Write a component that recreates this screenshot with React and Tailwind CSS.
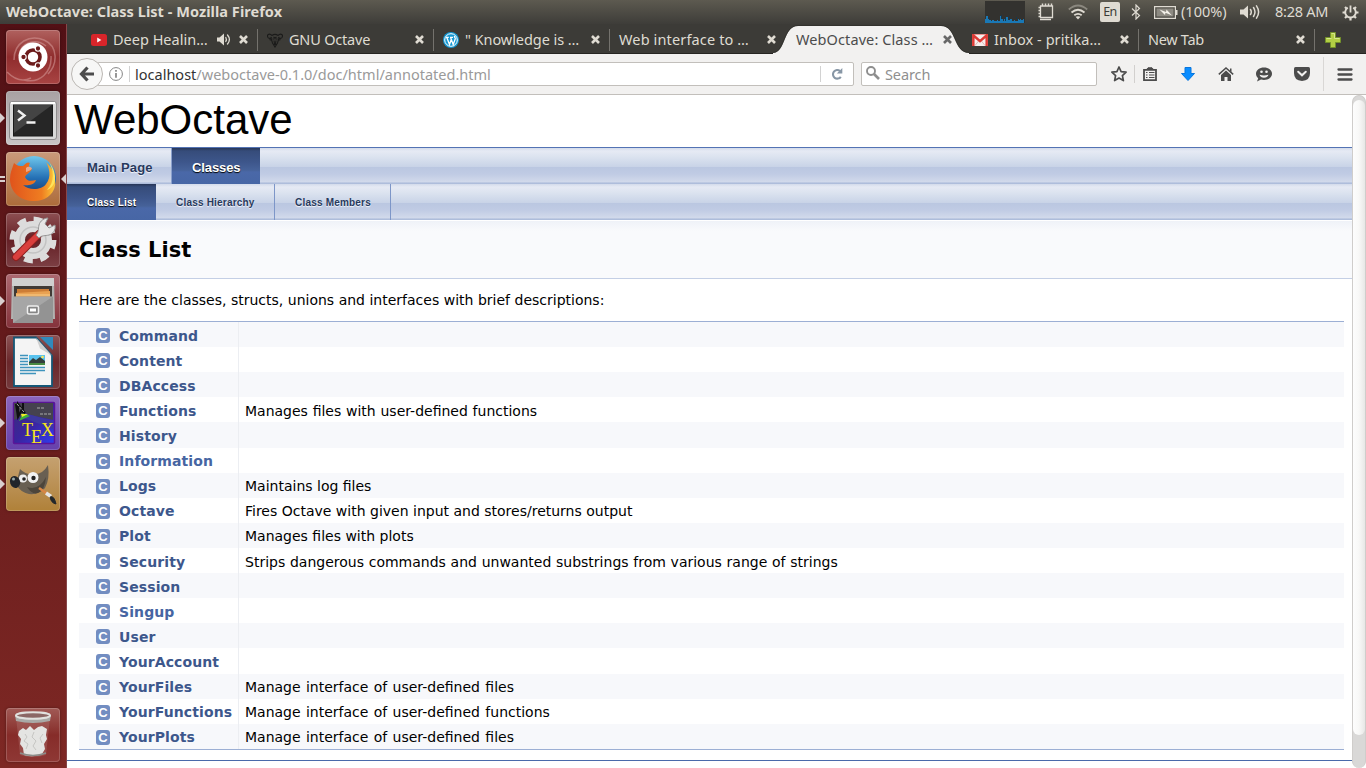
import React from "react";

const UI = "font-['Noto_Sans','Open_Sans',sans-serif]";

const Speaker = ({ className, fill }) => (
  <svg viewBox="0 0 20 16" className={className} fill="none" stroke={fill} strokeWidth="1.5" strokeLinecap="round">
    <path d="M0 5.5h3.5L8 1.5v13l-4.500-4H0z" fill={fill} stroke="none" />
    <path d="M10.500 5.500q1.600 2.500 0 5M13.500 3.500q3 4.500 0 9M16.500 1.800q4.200 6.200 0 12.400" />
  </svg>
);

const TabSpeaker = () => (
  <svg viewBox="0 0 14 13" className="mr-2 h-[13px] w-[14px]" fill="none" stroke="#dfdbd2" strokeLinecap="round">
    <path d="M0 4.500h2.500L7 .5v12L2.500 8.500H0z" fill="#dfdbd2" stroke="none" />
    <path d="M8.800 4.500q1.200 2 0 4" strokeWidth="1.300" />
    <path d="M10.500 2q3.800 4.500 0 9" strokeWidth="1.300" />
  </svg>
);

const Close = ({ color }) => (
  <svg viewBox="0 0 9 9" className="h-[9px] w-[9px] shrink-0" stroke={color} strokeWidth="2.6">
    <path d="M1 1l7 7M8 1L1 8" />
  </svg>
);

const YouTube = () => (
  <svg viewBox="0 0 16 12" className="h-[12px] w-4">
    <rect width="16" height="12" rx="2.500" fill="#d9252a" />
    <path d="M6.200 3.500v5L10.400 6z" fill="#fff" />
  </svg>
);

const Gnu = () => (
  <svg viewBox="0 0 16 16" className="h-4 w-4" fill="none" stroke="#1b1b1a" strokeWidth="1.100">
    <path d="M5 3.500C2 .5-.5 3 1 5.500c1 1.500 3 1 3.500-.5M11 3.500C14 .5 16.500 3 15 5.500c-1 1.500-3 1-3.500-.5M5 3.500c2-1.500 4-1.500 6 0M4 6l1.500 5L8 15l2.500-4L12 6M5.500 7h2M8.500 7h2M7 8.500l.5 3h1l.5-3M6.500 12.500h3M2.500 7.500L5 8.500M13.500 7.500L11 8.500M6.500 5l1.500 1 1.500-1" />
  </svg>
);

const WordPress = () => (
  <svg viewBox="0 0 16 16" className="h-4 w-4">
    <circle cx="8" cy="8" r="8" fill="#1598d3" />
    <circle cx="8" cy="8" r="6.300" fill="none" stroke="#fff" strokeWidth="1" />
    <path d="M2.800 5.300h3M7 5.300h3M3.800 5.500l2.700 7L8.400 7M7.600 5.500l2.600 7 2-5.500c.4-1.400-1-1.800-.8-3" fill="none" stroke="#fff" strokeWidth="1.300" />
  </svg>
);

const Gmail = () => (
  <svg viewBox="0 0 16 12" className="h-[12px] w-4">
    <rect width="16" height="12" rx="1" fill="#f4eeee" />
    <path d="M3 11.500l4-5M13 11.500l-4-5" stroke="#d9a7a5" strokeWidth=".8" />
    <path d="M1.300 12V1.300L8 7.200l6.700-5.900V12" fill="none" stroke="#dd3a35" strokeWidth="2.500" />
    <path d="M0 0h16" stroke="#dd3a35" strokeWidth="1" />
  </svg>
);

const tabs = [
  { title: "Deep Healin…", icon: <YouTube />, size: "w-[191px] pl-6", sound: true, sep: true },
  { title: "GNU Octave", icon: <Gnu />, size: "w-[176px] pl-[9px]", sep: true, track: "tracking-[-0.2px]" },
  { title: "\" Knowledge is …", icon: <WordPress />, size: "w-[176px] pl-[9px]", sep: true, track: "tracking-[-0.06px]" },
  { title: "Web interface to …", size: "w-[176px] pl-[9px]", track: "tracking-[0.14px]" },
  { title: "WebOctave: Class …", size: "w-[177px] pl-[10px]", active: true, track: "tracking-[0.1px]" },
  { title: "Inbox - pritika…", icon: <Gmail />, size: "w-[176px] pl-[9px]", sep: true, track: "tracking-[0.06px]" },
  { title: "New Tab", size: "w-[176px] pl-[9px]", sep: true, track: "tracking-[-0.3px]" },
];

function Tab({ tab }) {
  return (
    <div className={`relative flex h-[29px] items-center pt-px ${tab.size} ${tab.active ? "pr-[11px]" : "pr-[10px]"}`}>
      {tab.active && (
        <svg viewBox="0 0 204 29" className="absolute -left-[13px] top-[1px] h-[29px] w-[204px]">
          <path d="M0 28C13 28 10 1 25 1H168C184 1 180 28 196 28V29H0z" fill="#f2f1f0" />
          <path d="M0 27.500C12 27 10 .5 25 .5H168C184 .5 180 27 196 27.500" fill="none" stroke="#2a2926" strokeWidth="1" opacity=".5" />
        </svg>
      )}
      {tab.icon && <span className="relative mr-[6px] mt-px flex h-4 w-4 shrink-0 items-center">{tab.icon}</span>}
      <span className={`relative -mt-px flex-1 whitespace-nowrap text-[14.5px] leading-5 ${tab.track || ""} ${tab.active ? "text-[#4c4c4c]" : "text-[#dfdbd2]"}`}>{tab.title}</span>
      {tab.sound && <TabSpeaker />}
      <span className="relative flex"><Close color={tab.active ? "#686868" : "#dfdbd2"} /></span>
      {tab.sep && <i className="absolute right-0 top-[5px] h-[22px] w-px bg-[#74726d]" />}
    </div>
  );
}

function TitleBar() {
  return (
    <header className="flex h-6 items-center bg-linear-to-b from-[#5d5a50] to-[#3e3d39] pl-[6px] pr-[7px] text-[#dfdbd2]">
      <h1 className="-mt-[2px] flex-1 whitespace-nowrap text-[14.5px] font-bold leading-6 tracking-[0.05px]">WebOctave: Class List - Mozilla Firefox</h1>
      <svg viewBox="0 0 40 22" className="mr-3 h-[22px] w-10 bg-[#33322f]">
        <path d="M0 22V18h1v-3h2v3h1v1h2v1h1v-1h2v1h3v-1h1v1h2v-5h1v3h2v2h1v-2h1v1h1v-3h2v3h1v-1h3v2h2v-1h1v1h3v-2h1v1h1v-1h1v1h2v-1h1v4z" fill="#1a78b5" />
        <path d="M4 19v-3h1v3M15 18h1v-4h1v4M20 20v-4h1v4M24 19v-4h1v4M31 18v-2h1v2" fill="#15374d" />
      </svg>
      <svg viewBox="0 0 18 18" className="mr-[13px] h-[18px] w-[18px]" fill="none" stroke="#dfdbd2">
        <path d="M3.500 3h12v11.500h-12z" strokeWidth="1.300" />
        <path d="M5.500.5V3M8.500.5V3M11.500.5V3M14.500.5V3M1.500 4.500h2M1.500 7.500h2M1.500 10.500h2M1.500 13.500h2M3 16.500h11" strokeWidth="1.500" />
      </svg>
      <svg viewBox="0 0 20 16" className="mr-3 h-4 w-5" fill="none" strokeWidth="1.800" stroke="#dfdbd2">
        <path d="M.8 5.500Q10-2.500 19.200 5.500" stroke="#8b887f" />
        <path d="M3.500 8.500Q10 3 16.500 8.500M6.300 11.300Q10 8.500 13.700 11.300" />
        <path d="M10 15.500l-2.500-2.700Q10 11.500 12.500 12.800z" fill="#dfdbd2" stroke="none" />
      </svg>
      <span className="mr-[11px] flex h-5 w-5 items-center justify-center rounded-[2px] bg-[#dfdbd2] text-[12.5px] leading-none tracking-[-0.5px] text-[#3c3b37]">En</span>
      <svg viewBox="0 0 10 16" className="mr-[13px] h-4 w-[10px]" fill="none" stroke="#dfdbd2" strokeWidth="1.200">
        <path d="M1 4.500l7.500 7L5 15V1l3.500 3.500-7.500 7" />
      </svg>
      <svg viewBox="0 0 24 13" className="mr-[3px] h-[13px] w-6" fill="none" stroke="#dfdbd2">
        <path d="M.6.600h20.800v11.800H.600z" strokeWidth="1.200" />
        <path d="M2.500 2.500h17v8h-17z" fill="#8d8a82" stroke="none" />
        <path d="M22.500 4v5" strokeWidth="2" />
        <path d="M5.500 3.500L12 6l.5-2.500 5.500 6-6.500-2.700L11 9z" fill="#f3f0e9" stroke="none" />
      </svg>
      <span className="-mt-px mr-[13px] w-[46px] whitespace-nowrap text-[14.5px]">(100%)</span>
      <Speaker className="mr-[15px] h-4 w-5" fill="#dfdbd2" />
      <span className="-mt-px mr-[14px] w-[53px] whitespace-nowrap text-[14.5px] tracking-[-0.25px]">8:28 AM</span>
      <svg viewBox="0 0 17 17" className="h-[17px] w-[17px]" fill="none" stroke="#dfdbd2">
        <path d="M5.800 3.700a5.300 5.300 0 1 0 5.400 0" strokeWidth="1.900" />
        <path d="M8.500 1.500v7" strokeWidth="1.800" />
        <path d="M3 3l1.800 1.800M14 3l-1.800 1.800M.5 8.500h2.500M14 8.500h2.500M3 14l1.800-1.800M14 14l-1.800-1.800M8.500 14v2.500" strokeWidth="2.200" />
      </svg>
    </header>
  );
}

function TabBar() {
  return (
    <div className="flex h-[30px] items-start border-b border-[#262522] bg-[#3c3b37]">
      {tabs.map((t) => <Tab key={t.title} tab={t} />)}
      <svg viewBox="0 0 16 16" className="ml-[10px] mt-2 h-4 w-4">
        <path d="M5.500.500h5v5h5v5h-5v5h-5v-5h-5v-5h5z" fill="#b3cf45" stroke="#73912a" />
        <path d="M6.500 1.500h3v5h5M1.500 6.500h5" fill="none" stroke="#d7e68d" />
      </svg>
    </div>
  );
}

function Toolbar() {
  return (
    <div className="flex h-[41px] items-center border-b border-[#c2bfbb] bg-[#f2f1f0] pl-[4px]">
      <div className="relative z-10 flex h-8 w-8 items-center justify-center rounded-full border border-[#bbb7b3] bg-[#f7f7f6]">
        <svg viewBox="0 0 16 16" className="h-4 w-4" fill="none" stroke="#4c4c4c" strokeWidth="3.200">
          <path d="M8.500 1.500L2.500 8l6 6.500M3 8h12" />
        </svg>
      </div>
      <div className="-ml-[6px] flex h-6 w-[757px] items-center rounded-[2px] border border-[#c2bfbb] bg-white pl-[11px]">
        <svg viewBox="0 0 14 14" className="h-[14px] w-[14px]" fill="none" stroke="#858585">
          <circle cx="7" cy="7" r="6.400" strokeWidth="1" />
          <path d="M7 6v4.800M7 3v1.700" strokeWidth="1.700" />
        </svg>
        <i className="ml-[6px] h-4 w-px bg-[#d2d2d2]" />
        <span className="ml-[5px] flex-1 whitespace-nowrap text-[14.5px] leading-none tracking-[0.01px] text-[#9a9a9a]"><span className="text-[#333]">localhost</span>/weboctave-0.1.0/doc/html/annotated.html</span>
        <i className="h-4 w-px bg-[#d2d2d2]" />
        <svg viewBox="0 0 12 12" className="ml-[10px] mr-[10px] h-3 w-3" fill="none" stroke="#8796a5">
          <path d="M9 3A4.300 4.300 0 1 0 9.800 8.800" strokeWidth="2.100" />
          <path d="M11.300 0v5.600H5.800z" fill="#8796a5" stroke="none" />
        </svg>
      </div>
      <div className="ml-[7px] flex h-6 w-[236px] items-center rounded-[2px] border border-[#c2bfbb] bg-white pl-1">
        <svg viewBox="0 0 14 14" className="mr-[5px] mt-[-2px] h-[14px] w-[14px]" fill="none" stroke="#8e8e8e">
          <circle cx="5" cy="5" r="4" strokeWidth="1.900" />
          <path d="M8 8l5 5" strokeWidth="2.600" />
        </svg>
        <span className="text-[14.5px] leading-none tracking-[-0.1px] text-[#8f8f8f]">Search</span>
      </div>
      <svg viewBox="0 0 16 16" className="ml-[14px] h-4 w-4" fill="none" stroke="#4c4c4c" strokeWidth="1.700" strokeLinejoin="round">
        <path d="M8 1l2.100 4.600 5 .6-3.700 3.400 1 5L8 12.100l-4.400 2.500 1-5L.9 6.200l5-.6z" />
      </svg>
      <i className="ml-[7px] h-[18px] w-px bg-[#d2d0ce]" />
      <svg viewBox="0 0 14 14" className="ml-2 h-[14px] w-[14px]" fill="none" stroke="#4c4c4c">
        <path d="M1 2.800h12v10.300H1z" strokeWidth="1.800" />
        <path d="M3.500 2.500L5 .8h4l1.500 1.700z" fill="#4c4c4c" />
        <path d="M3 5.500h1.500M3 8h1.500M3 10.500h1.500M6 5.500h5.500M6 8h5.500M6 10.500h5.500" strokeWidth="1.200" />
      </svg>
      <svg viewBox="0 0 14 14" className="ml-6 h-[14px] w-[14px]">
        <path d="M4 .5h6v6h3.500L7 13.500.5 6.500H4z" fill="#0a8dff" stroke="#0876dd" />
      </svg>
      <svg viewBox="0 0 16 14" className="ml-[23px] h-[14px] w-4" fill="#4c4c4c">
        <path d="M.8 7.400L8 1l7.200 6.400" fill="none" stroke="#4c4c4c" strokeWidth="1.500" />
        <path d="M3 8l5-4.400L13 8v6H9.500v-4h-3v4H3z" />
        <path d="M12 1.500h1.500V5L12 4z" />
      </svg>
      <svg viewBox="0 0 16 15" className="ml-[22px] h-[15px] w-4">
        <path d="M8 .5c4.500 0 8 2.700 8 6.300S12.500 13 8 13c-1 0-2-.1-3-.4L1 14.500l1.200-3.200C.8 10.200 0 8.600 0 6.800 0 3.200 3.500.500 8 .500z" fill="#4c4c4c" />
        <circle cx="5.500" cy="4.700" r="1.300" fill="#f2f1f0" /><circle cx="10.500" cy="4.700" r="1.300" fill="#f2f1f0" />
        <path d="M3.500 7.800q4.500 1.600 9 0-1 2.900-4.500 2.900T3.500 7.800z" fill="#f2f1f0" />
      </svg>
      <svg viewBox="0 0 16 14" className="ml-[22px] h-[14px] w-4">
        <path d="M1.500 0h13Q16 0 16 1.500V6q0 7.500-8 8Q0 13.500 0 6V1.500Q0 0 1.500 0z" fill="#4c4c4c" />
        <path d="M4.200 4.700L8 8.300l3.800-3.600" fill="none" stroke="#f2f1f0" strokeWidth="2" strokeLinecap="round" />
      </svg>
      <i className="ml-[13px] h-[34px] w-px bg-[#d9d7d5]" />
      <svg viewBox="0 0 16 13" className="ml-[13px] h-[13px] w-4" stroke="#4c4c4c" strokeWidth="2.300" strokeLinecap="round">
        <path d="M1.500 1.500h13M1.500 6.500h13M1.500 11.500h13" />
      </svg>
    </div>
  );
}

const launchers = [
  {
    name: "dash", bg: "bg-linear-to-b from-[#b0615f] via-[#8f2c2d] to-[#a94443]",
    art: (
      <>
        <path d="M8 30C8 12 24 4 38 10s14 24 4 34M13 26C14 12 30 8 40 16M18 50C34 54 46 42 45 26M1 42q12 12 24 6" fill="none" stroke="#d69b99" strokeWidth="1.500" opacity=".55" />
        <circle cx="27" cy="27" r="14.500" fill="#fff" />
        <circle cx="27" cy="27" r="7" fill="none" stroke="#6c1b1b" strokeWidth="3.600" />
        <g fill="#6c1b1b" stroke="#fff" strokeWidth="1.100"><circle cx="17.500" cy="27" r="2.700" /><circle cx="32" cy="18.500" r="2.700" /><circle cx="32" cy="35.500" r="2.700" /></g>
      </>
    ),
  },
  {
    name: "terminal", run: true, bg: "bg-linear-to-b from-[#a8a1a3] to-[#c9c5c6]",
    art: (
      <>
        <rect x="3.500" y="10.500" width="47" height="38" rx="2.500" fill="#d9d9d9" stroke="#8f8d8e" />
        <path d="M5 12h44" stroke="#fff" strokeWidth="2" />
        <rect x="7.500" y="14" width="39" height="31" fill="#262626" stroke="#1a1a1a" />
        <path d="M8 14h38L8 42z" fill="#555" opacity=".65" />
        <path d="M12 19.500l6.500 5-6.500 5M20.500 31.500h9" fill="none" stroke="#f1f1f1" strokeWidth="2.400" />
      </>
    ),
  },
  {
    name: "firefox", run: true, focused: true, bg: "bg-linear-to-b from-[#c99a7b] to-[#ad6c3a]",
    art: (
      <>
        <circle cx="28" cy="26" r="22" fill="url(#ffBlue)" />
        <path d="M8 11c3 3 6 3 9 3 4-4 5-4 7-3-2 3-1 5 2 6-2 4-6 5-7 8 2 5 7 4 11 3-1 5-10 6-13 5 6 6 19 5 23-1 6-7 3-17 0-22 7 6 10 15 9 24-2 10-12 16-23 15C12 48 4 38 4 27c0-6 2-10 4-16z" fill="url(#ffOrange)" />
        <path d="M43 10c5 8 6 20-2 28 11-4 10-18 2-28z" fill="#ffe25a" />
        <path d="M20 16c2-2 4-1 6 0-1 3-4 3-6 4z" fill="#e9a88b" />
      </>
    ),
  },
  {
    name: "settings", bg: "bg-linear-to-b from-[#8d4f52] via-[#652026] to-[#7c3f44]",
    art: (
      <>
        <circle cx="27" cy="27" r="20" fill="none" stroke="#dcdcdc" strokeWidth="7" strokeDasharray="8.400 7.308" />
        <circle cx="27" cy="27" r="13.500" fill="none" stroke="#dcdcdc" strokeWidth="11" />
        <circle cx="27" cy="27" r="13" fill="none" stroke="#c3c3c3" strokeWidth="1.500" />
        <path d="M33 21L10 44" stroke="#8d1f1f" strokeWidth="8" strokeLinecap="round" />
        <path d="M32 22L10 44" stroke="#d93f3d" strokeWidth="6" strokeLinecap="round" />
        <path d="M33 25l-3-3c3-3 2-6 3-10 1-4 5-7 9-7l-3 6 4 4 6-3c1 5-2 9-6 10s-7 0-10 3z" fill="#e6e6e6" stroke="#949494" />
      </>
    ),
  },
  {
    name: "files", run: true, bg: "bg-linear-to-b from-[#ac6971] to-[#84323b]",
    art: (
      <>
        <path d="M6 5q0-1 1-1h40q1 0 1 1l1 40H5z" fill="#b2b2b0" />
        <path d="M6 4h42v8H6z" fill="#d0d0cf" />
        <path d="M8 12h38v13H8z" fill="#403a35" />
        <path d="M11 15h32v10H11z" fill="#cd7d36" /><path d="M10 19l34-2v8H10z" fill="#e9a253" /><path d="M10 21h34" stroke="#f7cf8d" />
        <path d="M7 22.500h40V49H7z" fill="#939393" /><path d="M7 22.500h40L7 49z" fill="#b9b9b9" opacity=".5" />
        <rect x="21.500" y="32" width="11" height="8" rx="1.500" fill="#858585" stroke="#eee" strokeWidth="1.500" />
        <rect x="24" y="34.500" width="6" height="3" fill="#fff" />
      </>
    ),
  },
  {
    name: "writer", bg: "bg-linear-to-b from-[#8c5355] via-[#6a272b] to-[#74393c]",
    art: (
      <>
        <path d="M34 2h13v13z" fill="#308abb" />
        <path d="M8 2.500h22l16 18V51H8z" fill="#f4f4f4" stroke="#155777" strokeWidth="1.800" />
        <path d="M30 2.500l16 18-12-7z" fill="#cfcfcf" />
        <path d="M14 20.500h8M14 23.500h8M14 26.500h8M14 29.500h8M14 32.500h25M14 35.500h25M14 38.500h16" stroke="#3f94bd" strokeWidth="1.600" />
        <path d="M23 20h16v10H23z" fill="#59c3ef" /><path d="M23 27l4-4 3 2 4-3 5 4v4H23z" fill="#343f3d" /><path d="M23 28h16v2H23z" fill="#498a42" /><circle cx="36.500" cy="22" r="1.300" fill="#ffe553" />
      </>
    ),
  },
  {
    name: "tex", run: true, bg: "bg-linear-to-b from-[#8c65bd] to-[#6640ab]",
    art: (
      <>
        <rect x="7.500" y="6.500" width="41" height="41" rx="1" fill="url(#texBlue)" stroke="#5a1598" strokeWidth="1.500" />
        <path d="M8 7h39v17L20 18 8 24z" fill="#45424f" />
        <path d="M18 17l29 8v8L15 21z" fill="#3d38a0" /><path d="M17 17l7 3-11 5z" fill="#3db23c" /><path d="M15 18l7 0-6 3z" fill="#f2ee28" />
        <path d="M10 8l2 13 3-6 4 2-7-9v12M17 7v8" stroke="#0f0f12" strokeWidth="2" fill="none" />
        <path d="M11 8l7 8M31 12h8M34 18h12" stroke="#aaa" strokeWidth="1" strokeDasharray="3 1" fill="none" />
        <g fill="#f5e51b" fontFamily="Liberation Serif, serif" fontSize="18"><text x="16" y="40">T</text><text x="25" y="46.500">E</text><text x="35" y="40">X</text></g>
      </>
    ),
  },
  {
    name: "gimp", run: true, bg: "bg-linear-to-b from-[#c5a170] to-[#b08138]",
    art: (
      <>
        <path d="M14 12q7 7 15 5 8 0 13-9 2 14-3 23-6 7-16 6-9-2-13-10z" fill="#685f52" />
        <path d="M21 30q12 4 19-10-1 13-8 16-6 2-11-6z" fill="#4c453b" />
        <circle cx="17" cy="21.500" r="4" fill="#eee" /><circle cx="27" cy="20.500" r="5.500" fill="#f2f2f2" /><circle cx="18" cy="22" r="1.800" fill="#222" /><circle cx="27.500" cy="21" r="2.200" fill="#222" />
        <ellipse cx="9" cy="25" rx="5" ry="6" fill="#20252b" transform="rotate(-20 9 25)" /><circle cx="7.500" cy="22" r="1.500" fill="#9aa" />
        <path d="M33 31l10 7" stroke="#d98645" strokeWidth="2.500" /><path d="M40 36l5 3.500" stroke="#e5e5e5" strokeWidth="3.500" /><path d="M44 40q4-2 6 7-5-1-6-7z" fill="#23272b" stroke="#23272b" />
      </>
    ),
  },
];

const trash = (
  <>
    <path d="M10 9h34l-4 38q-13 4-26 0z" fill="#b98482" opacity=".3" />
    <path d="M13 23l4-3 3 2 4-4 4 4 4-3 4-1 5 3-1 6 1 4-3 5 1 5-3 5q-9 4-18 1l-1-7-3-4 1-5-3-4z" fill="#e4e4e2" />
    <path d="M19 26l2 3-3 4 4 3-2 5M28 24l-2 5 4 4-3 5 3 4M37 26l-3 4 2 5" fill="none" stroke="#c6c6c3" strokeWidth="1" />
    <path d="M14 45q13 5 26 0" fill="none" stroke="#8d8d8a" strokeWidth="1.500" />
    <path d="M9 7l1 6q17 4 34 0l1-6z" fill="#a9a9a6" />
    <ellipse cx="27" cy="7.500" rx="17" ry="3.200" fill="#8b6765" stroke="#e1e1de" strokeWidth="2" />
  </>
);

function Launcher({ bg, art, run, focused }) {
  return (
    <div className="relative flex h-[54px] justify-center">
      {run && !focused && <i className="absolute left-0 top-[22px] h-0 w-0 border-y-[5px] border-l-[5px] border-y-transparent border-l-[#d9cfcf]" />}
      {focused && <><i className="absolute left-0 top-[24px] h-[6px] w-[5px] border-y-2 border-[#d9cfcf]" /><i className="absolute right-0 top-[22px] h-0 w-0 border-y-[5px] border-r-[5px] border-y-transparent border-r-[#d9cfcf]" /></>}
      <div className={`h-[54px] w-[54px] overflow-hidden rounded-[4px] shadow-[inset_0_0_0_1px_rgba(255,255,255,0.18),0_0_3px_rgba(0,0,0,0.35)] ${bg}`}>
        <svg viewBox="0 0 54 54" className="h-full w-full">{art}</svg>
      </div>
    </div>
  );
}

function Sidebar() {
  return (
    <aside className="flex w-[67px] shrink-0 flex-col gap-[7px] border-r border-[#87474a] bg-linear-to-b from-[#521015] to-[#7e2824] pb-[6px] pt-[6px]">
      <svg className="absolute h-0 w-0">
        <defs>
          <linearGradient id="ffBlue" x2="0" y2="1"><stop offset="0" stopColor="#70c7ec" /><stop offset=".5" stopColor="#2470b5" /><stop offset="1" stopColor="#132b60" /></linearGradient>
          <linearGradient id="ffOrange" x2="1" y2="0"><stop offset="0" stopColor="#e0541c" /><stop offset=".7" stopColor="#ef7d21" /><stop offset="1" stopColor="#fbc93a" /></linearGradient>
          <linearGradient id="texBlue" x2="1" y2="1"><stop offset="0" stopColor="#3a2e78" /><stop offset=".5" stopColor="#3b249e" /><stop offset="1" stopColor="#2f3cf0" /></linearGradient>
        </defs>
      </svg>
      {launchers.map((l) => <Launcher key={l.name} {...l} />)}
      <div className="mt-auto"><Launcher bg="bg-linear-to-b from-[#a15a56] via-[#862c29] to-[#8f3835]" art={trash} /></div>
    </aside>
  );
}

const classes = [
  ["Command"], ["Content"], ["DBAccess"],
  ["Functions", "Manages files with user-defined functions", "[word-spacing:0.3px]"],
  ["History"], ["Information"],
  ["Logs", "Maintains log files"],
  ["Octave", "Fires Octave with given input and stores/returns output"],
  ["Plot", "Manages files with plots"],
  ["Security", "Strips dangerous commands and unwanted substrings from various range of strings", "[word-spacing:0.28px]"],
  ["Session"], ["Singup"], ["User"], ["YourAccount"],
  ["YourFiles", "Manage interface of user-defined files", "[word-spacing:0.9px]"],
  ["YourFunctions", "Manage interface of user-defined functions", "[word-spacing:0.9px]"],
  ["YourPlots", "Manage interface of user-defined files", "[word-spacing:0.9px]"],
];

const visited = ["Information", "Singup"];
const navBg = "bg-[linear-gradient(to_bottom,#d3dbeb_0px,#e6eaf4_3px,#dde4f0_8px,#c8d3e7_19px,#bac7e1_19px,#c0cbe4_26px,#d2daeb_34px,#a9b9d9_35px,#b3c1dd_36px)]";
const navActive = "bg-[linear-gradient(to_bottom,#273657_0px,#364c7a_3px,#3d568b_14px,#466299_22px,#4a68a8_24px,#4766a5_36px)] text-white [text-shadow:0_1px_1px_#000]";
const navIdle = "text-[#283a5d] [text-shadow:0_1px_1px_rgba(255,255,255,0.9)]";

function Page() {
  return (
    <main className="flex min-w-0 flex-1 flex-col bg-white font-['DejaVu_Sans',sans-serif] text-[14px] text-black">
      <div className="h-[53px] border-b border-[#5373b4] pl-[7px] font-['Liberation_Sans',Arial,sans-serif] text-[42px] leading-[49px]">WebOctave</div>
      <nav className={`flex h-9 font-['Liberation_Sans',Arial,sans-serif] text-[13px] font-bold leading-[39px] ${navBg}`}>
        <a className={`w-[105px] whitespace-nowrap border-r border-[#8ba1cd] pl-5 tracking-[0.15px] ${navIdle}`}>Main Page</a>
        <a className={`w-[88px] whitespace-nowrap pl-5 tracking-[-0.1px] ${navActive}`}>Classes</a>
      </nav>
      <nav className={`flex h-9 font-['Liberation_Sans',Arial,sans-serif] text-[10px] font-bold leading-[37px] tracking-[0.2px] ${navBg}`}>
        <a className={`w-[89px] whitespace-nowrap pl-5 ${navActive}`}>Class List</a>
        <a className={`w-[119px] whitespace-nowrap border-r border-[#7d96c8] pl-5 ${navIdle}`}>Class Hierarchy</a>
        <a className={`w-[116px] whitespace-nowrap border-r border-[#7d96c8] pl-5 ${navIdle}`}>Class Members</a>
      </nav>
      <div className="h-[59px] border-b border-t border-b-[#c4cfe5] border-t-white bg-[linear-gradient(to_bottom,#eff2f8_0px,#f9fafc_10px)] pl-3 text-[21px] font-bold leading-[59px]">Class List</div>
      <p className="h-[42px] pl-3 leading-[42px] [word-spacing:0.05px]">Here are the classes, structs, unions and interfaces with brief descriptions:</p>
      <div className="ml-3 mr-2 border-y border-[#9cafd4]">
        {classes.map(([name, desc, spacing], i) => (
          <div key={name} className={`flex h-[25.12px] items-center ${i % 2 ? "bg-white" : "bg-[#f7f8fb]"}`}>
            <div className="flex h-full w-[160px] items-center border-r border-[#eceef2] pl-[17px]">
              <span className="mr-[9px] mt-[2px] flex h-[15px] w-[14px] items-center justify-center rounded-[3px] bg-[#728dc1] font-['Liberation_Sans',Arial,sans-serif] text-[13px] font-bold leading-none text-white">C</span>
              <a className={`mt-[2.1px] font-bold leading-[22px] tracking-[0.1px] ${visited.includes(name) ? "text-[#4665a2]" : "text-[#3d578c]"}`}>{name}</a>
            </div>
            <span className={`mt-[2.1px] pl-[6px] leading-[22px] ${spacing || ""}`}>{desc}</span>
          </div>
        ))}
      </div>
      <div className="mt-[10px] border-t border-[#4a6aaa]" />
    </main>
  );
}

export default function App() {
  return (
    <div className={`flex h-[768px] w-[1366px] flex-col overflow-hidden ${UI}`}>
      <TitleBar />
      <div className="flex min-h-0 flex-1">
        <Sidebar />
        <div className="flex min-w-0 flex-1 flex-col">
          <TabBar />
          <Toolbar />
          <div className="flex min-h-0 flex-1">
            <Page />
            <div className="w-[14px] shrink-0 overflow-hidden rounded-[7px] border border-b-0 border-[#cfcdcb] bg-[#d9d8d7] pt-[4px]">
              <div className="h-[635px] rounded-[6px] bg-linear-to-r from-[#fdfdfd] via-[#f8f8f7] to-[#e8e7e6]" />
            </div>
          </div>
        </div>
      </div>
    </div>
  );
}
